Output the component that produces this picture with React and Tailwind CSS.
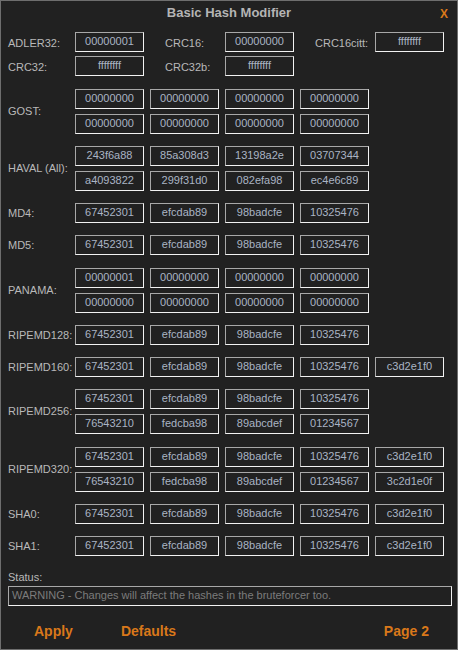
const font = { fontFamily: '"Liberation Sans", Arial, sans-serif' };

function Box({ v }) {
    return (
        <div className="h-5 w-[69px] border border-t-[#a8a8a8] border-l-[#a8a8a8] border-b-[#f2f2f2] border-r-[#f2f2f2] flex items-center justify-center pb-[2px] text-[11px] leading-none text-[#aab4c4]">
            {v}
        </div>
    );
}

const groups = [
    { name: "GOST:", rows: [["00000000", "00000000", "00000000", "00000000"], ["00000000", "00000000", "00000000", "00000000"]] },
    { name: "HAVAL (All):", rows: [["243f6a88", "85a308d3", "13198a2e", "03707344"], ["a4093822", "299f31d0", "082efa98", "ec4e6c89"]] },
    { name: "MD4:", rows: [["67452301", "efcdab89", "98badcfe", "10325476"]] },
    { name: "MD5:", rows: [["67452301", "efcdab89", "98badcfe", "10325476"]] },
    { name: "PANAMA:", extra: true, rows: [["00000001", "00000000", "00000000", "00000000"], ["00000000", "00000000", "00000000", "00000000"]] },
    { name: "RIPEMD128:", rows: [["67452301", "efcdab89", "98badcfe", "10325476"]] },
    { name: "RIPEMD160:", rows: [["67452301", "efcdab89", "98badcfe", "10325476", "c3d2e1f0"]] },
    { name: "RIPEMD256:", rows: [["67452301", "efcdab89", "98badcfe", "10325476"], ["76543210", "fedcba98", "89abcdef", "01234567"]] },
    { name: "RIPEMD320:", extra: true, rows: [["67452301", "efcdab89", "98badcfe", "10325476", "c3d2e1f0"], ["76543210", "fedcba98", "89abcdef", "01234567", "3c2d1e0f"]] },
    { name: "SHA0:", rows: [["67452301", "efcdab89", "98badcfe", "10325476", "c3d2e1f0"]] },
    { name: "SHA1:", rows: [["67452301", "efcdab89", "98badcfe", "10325476", "c3d2e1f0"]] },
];

export default function App() {
    return (
        <div style={font} className="w-[458px] h-[650px] bg-[#212121] border border-[#6e6e6e] text-[#b9b9b9] flex flex-col">
            {/* title bar */}
            <div className="h-[23px] relative flex items-center justify-center">
                <span className="font-bold text-[13px] text-[#b4b4b4]">Basic Hash Modifier</span>
                <span className="absolute right-[9px] top-[4px] font-bold text-[12px] text-[#d9781a]">X</span>
            </div>

            {/* CRC rows */}
            <div className="mt-[8px] flex flex-col gap-1 text-[11px]">
                <div className="flex items-center">
                    <span className="w-[74px] pl-[7px] mt-[3px]">ADLER32:</span>
                    <Box v="00000001" />
                    <span className="w-[81px] pl-[21px] mt-[3px]">CRC16:</span>
                    <Box v="00000000" />
                    <span className="w-[81px] pl-[21px] mt-[3px]">CRC16citt:</span>
                    <Box v="ffffffff" />
                </div>
                <div className="flex items-center">
                    <span className="w-[74px] pl-[7px] mt-[3px]">CRC32:</span>
                    <Box v="ffffffff" />
                    <span className="w-[81px] pl-[21px] mt-[3px]">CRC32b:</span>
                    <Box v="ffffffff" />
                </div>
            </div>

            {/* hash groups */}
            <div className="mt-[13px] flex flex-col gap-3 text-[11px]">
                {groups.map(g => (
                    <div key={g.name} className={`flex items-center ${g.extra ? "mt-px" : ""}`}>
                        <span className="w-[74px] pl-[7px]">{g.name}</span>
                        <div className="flex flex-col gap-[5px]">
                            {g.rows.map((r, i) => (
                                <div key={i} className="flex gap-[6px]">
                                    {r.map((v, j) => <Box key={j} v={v} />)}
                                </div>
                            ))}
                        </div>
                    </div>
                ))}
            </div>

            {/* status */}
            <div className="mt-[16px] pl-[7px] text-[11px]">
                <div className="leading-none">Status:</div>
                <div className="mt-[3px] h-5 w-[444px] border border-t-[#a8a8a8] border-l-[#a8a8a8] border-b-[#f2f2f2] border-r-[#f2f2f2] flex items-center pl-[3px] pb-[2px] text-[11px] text-[#7c7c7c]">
                    WARNING - Changes will affect the hashes in the bruteforcer too.
                </div>
            </div>

            {/* buttons */}
            <div className="mt-[15px] flex items-center text-[14px] font-bold text-[#d9781a]">
                <span className="ml-[33px]">Apply</span>
                <span className="ml-[48px]">Defaults</span>
                <span className="ml-auto mr-[28px]">Page 2</span>
            </div>
        </div>
    );
}
